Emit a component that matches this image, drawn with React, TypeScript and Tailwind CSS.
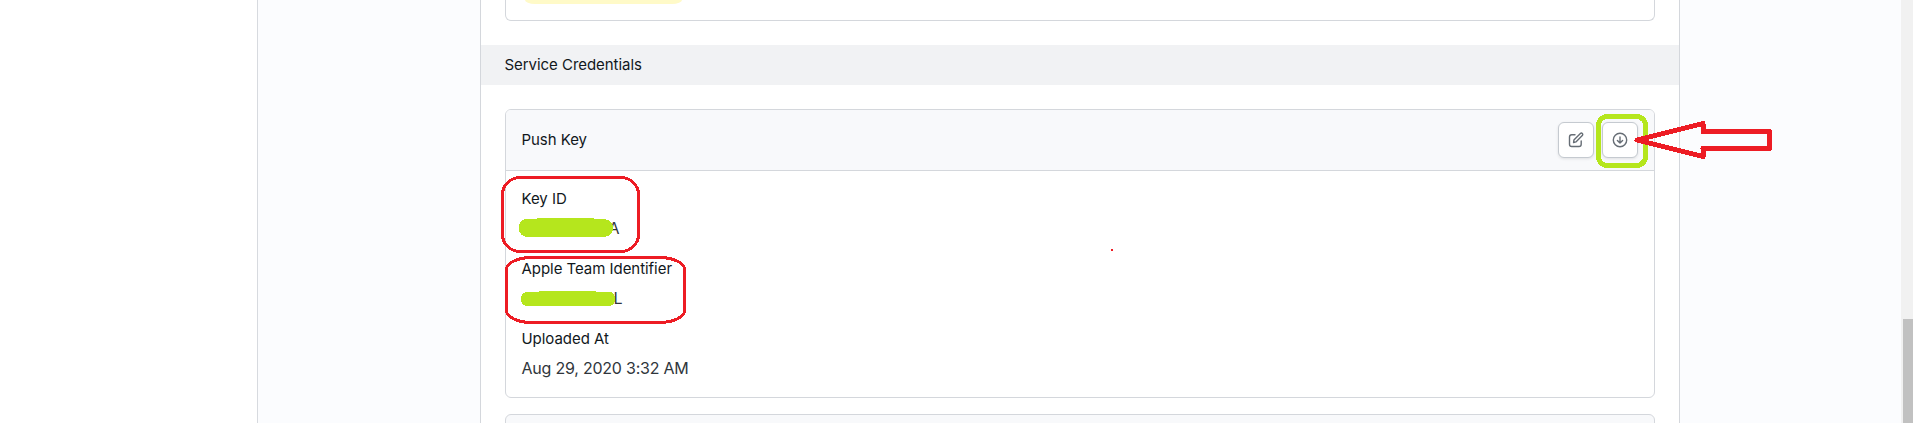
import type { ReactNode } from 'react';

function IconButton({ label, children }: { label: string; children: ReactNode }) {
  return (
    <button
      aria-label={label}
      className="flex size-9 items-center justify-center rounded-md border border-[#c5cad0] bg-white text-[#666d75] shadow-[0_1px_3px_rgba(0,0,0,0.1)]"
    >
      {children}
    </button>
  );
}

function EditIcon() {
  return (
    <svg width="16" height="16" viewBox="0 0 16 16" fill="none" stroke="currentColor" strokeWidth="1.4" strokeLinecap="round" strokeLinejoin="round">
      <path d="M7 2.8H3.7C2.4 2.8 1.5 3.7 1.5 5v7.3c0 1.3.9 2.2 2.2 2.2H11c1.3 0 2.2-.9 2.2-2.2V9" />
      <path d="m5.6 10.5.3-2.4 6.5-6.5c.6-.6 1.4-.6 1.9-.1.6.6.6 1.4 0 2L7.9 9.9z" />
    </svg>
  );
}

function DownloadIcon() {
  return (
    <svg width="16" height="16" viewBox="0 0 16 16" fill="none" stroke="currentColor" strokeWidth="1.4" strokeLinecap="round" strokeLinejoin="round">
      <circle cx="8" cy="8" r="6.7" />
      <path d="M8 5v6M5.4 8.4 8 11l2.6-2.6" />
    </svg>
  );
}

function Field({ label, children }: { label: string; children: ReactNode }) {
  return (
    <div className="flex flex-col gap-[5px]">
      <div className="h-6 text-[15px] leading-6 tracking-[-0.003em]">{label}</div>
      <div className="mb-px h-6 text-base leading-6 tracking-[-0.014em] text-[#30363c]">{children}</div>
    </div>
  );
}

function Annotations() {
  return (
    <svg className="pointer-events-none absolute left-0 top-0" width="1913" height="423" fill="none" shapeRendering="crispEdges">
      <g fill="#b5e61d">
        <path d="M526 219H537V218H594V219H604Q613 220 613 228T604 237H527Q519 236 519 228Q519 220 526 219Z" />
        <path d="M526 292H539V291H596V292H611Q615 293 615 299T609 306H526Q521 305 521 299T526 292Z" />
      </g>
      <g stroke="#ed1c24" strokeWidth="3">
        <rect x="502.5" y="177.5" width="136" height="74" rx="18" ry="17" />
        <rect x="506.5" y="257.5" width="178" height="65" rx="25" ry="12" />
      </g>
      <rect x="1598.5" y="116.5" width="47" height="49" rx="9" stroke="#b5e61d" strokeWidth="5" />
      <path d="M1637 140 1703 123.500V131.500H1769.500V148.500H1703V156.500Z" stroke="#ed1c24" strokeWidth="5" strokeLinejoin="round" />
      <rect x="1111" y="249" width="2" height="2" fill="#ed1c24" />
    </svg>
  );
}

export default function App() {
  return (
    <div className="relative flex h-[423px] w-[1913px] overflow-hidden bg-[#fbfcfe] font-['Inter',sans-serif] text-[#11181c]">
      <aside className="w-[258px] shrink-0 border-r border-[#d7dadf] bg-white" />
      <main className="flex flex-1 pl-[222px]">
        <div className="flex h-[423px] w-[1200px] flex-col overflow-hidden border-x border-[#d4d7dc] bg-white">
          <section className="mx-6 h-[21px] shrink-0 rounded-b-md border border-t-0 border-[#d4d7dc] pl-[19px]">
            <div className="h-1 w-[157px] rounded-b-[10px_4px] bg-[#fffac8]" />
          </section>
          <h2 className="mt-6 flex h-10 shrink-0 items-center bg-[#f1f2f4] pl-[23.5px] text-[15px] tracking-[-0.003em]">Service Credentials</h2>
          <section className="mx-6 mt-6 h-[289px] shrink-0 overflow-hidden rounded-md border border-[#d4d7dc]">
            <header className="flex h-[61px] items-center justify-between border-b border-[#d4d7dc] bg-[#f8f9fb] pl-[15.5px] pr-4">
              <h3 className="text-[15px] tracking-[-0.003em]">Push Key</h3>
              <div className="flex gap-2">
                <IconButton label="Edit"><EditIcon /></IconButton>
                <IconButton label="Download"><DownloadIcon /></IconButton>
              </div>
            </header>
            <div className="flex flex-col gap-4 py-4 pl-[15.5px]">
              <Field label="Key ID"><span className="pl-[87px]">A</span></Field>
              <Field label="Apple Team Identifier"><span className="pl-[92px]">L</span></Field>
              <Field label="Uploaded At">Aug 29, 2020 3:32 AM</Field>
            </div>
          </section>
          <section className="mx-6 mt-4 h-[61px] shrink-0 rounded-t-md border border-[#d4d7dc] bg-[#f8f9fb]" />
        </div>
      </main>
      <div className="flex w-3 shrink-0 flex-col bg-[#f1f1f1] pl-0.5 pt-[319px]">
        <div className="flex-1 bg-[#c1c1c1]" />
      </div>
      <Annotations />
    </div>
  );
}
